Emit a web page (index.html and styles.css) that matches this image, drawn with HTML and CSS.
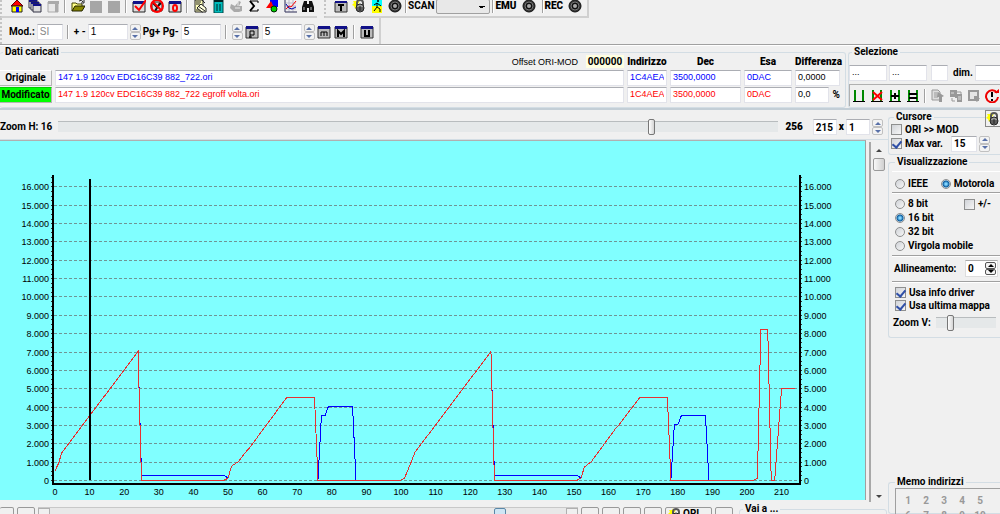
FILE: index.html
```html
<!DOCTYPE html>
<html lang="it">
<head>
    <meta charset="UTF-8">
    <meta name="viewport" content="width=device-width, initial-scale=1.0">
    <title>Editor mappe</title>
    <link rel="stylesheet" href="styles.css">
</head>
<body>
    <svg class="sprites" aria-hidden="true">
        <symbol id="home" viewBox="0 0 14 14"><path d="M1 7L7 1l6 6z" fill="#f00" stroke="#600"/><path d="M2 7h10v6H2z" fill="#ff0" stroke="#222"/><path d="M6 8h3v5H6z" fill="#00f"/></symbol>
        <symbol id="windows" viewBox="0 0 14 14"><path d="M1 1h8v8H1z" fill="#fff" stroke="#334"/><path d="M1 1h8v2H1z" fill="#118"/><path d="M3 3h8v8H3z" fill="#fff" stroke="#334"/><path d="M3 3h8v2H3z" fill="#118"/><path d="M5 5h8v8H5z" fill="#ddd" stroke="#334"/><path d="M5 5h8v2H5z" fill="#118"/></symbol>
        <symbol id="panel" viewBox="0 0 14 14"><path d="M2 3h10v10H2z" fill="#e8e8e8" stroke="#aaa"/><path d="M2 2h11v3H2zM9 5h3v8H9z" fill="#aaa"/></symbol>
        <symbol id="folder" viewBox="0 0 14 14"><path d="M1 12V4h4l1 1h5v3" fill="#ff8" stroke="#440"/><path d="M1 12l3-5h10l-3 5z" fill="#880" stroke="#220"/><path d="M8 2q3-2 4 1m1-2v3h-3" fill="none" stroke="#222"/></symbol>
        <symbol id="square" viewBox="0 0 14 14"><path d="M1 2h12v12H1z" fill="#a6a6a6"/></symbol>
        <symbol id="check" viewBox="0 0 14 14"><path d="M1 3h12v10H1z" fill="#ddd" stroke="#222"/><path d="M1 2h12v3H1z" fill="#118"/><path d="M3 7l4 4 7-10" fill="none" stroke="#f00" stroke-width="2"/></symbol>
        <symbol id="deny" viewBox="0 0 14 14"><path d="M2 3h10v9H2z" fill="#ddd" stroke="#222"/><path d="M3 4l4 4 4-4M5 12l5-8" fill="none" stroke="#111" stroke-width="2"/><circle cx="7" cy="7" r="6" fill="none" stroke="#f00" stroke-width="2"/><path d="M3 3l8 8" stroke="#f00" stroke-width="2"/></symbol>
        <symbol id="zero" viewBox="0 0 14 14"><path d="M1 3h12v10H1z" fill="#ddd" stroke="#222"/><path d="M1 2h12v3H1z" fill="#118"/><ellipse cx="7" cy="9" rx="2" ry="3" fill="none" stroke="#f00" stroke-width="2"/></symbol>
        <symbol id="edit" viewBox="0 0 14 14"><path d="M2 1h8v12H2z" fill="#ffb" stroke="#222"/><path d="M3 3h5M3 5h4M3 11h5" stroke="#222"/><path d="M4 9l4-4 5 4v4H9z" fill="#ffd" stroke="#222"/><path d="M5 7l7 5M9 1l3 3" stroke="#222"/></symbol>
        <symbol id="gauge" viewBox="0 0 14 14"><path d="M3 0h9v14H3z" fill="#0bb" stroke="#044"/><path d="M3 2h9" stroke="#022" stroke-width="2"/><path d="M6 5v7M9 5v7" stroke="#022"/></symbol>
        <symbol id="hand" viewBox="0 0 14 14"><path d="M2 5l4 2 4-5 2 1-2 4h3v5l-3 1H5L1 9z" fill="#aaa"/><path d="M9 3v4M6 9h5" stroke="#eee"/></symbol>
        <symbol id="sigma" viewBox="0 0 14 14"><path d="M11 4V2H3l4 5-4 5h8v-2" fill="none" stroke="#000" stroke-width="1"/><path d="M3 2l4 5-4 5" fill="none" stroke="#000" stroke-width="2"/></symbol>
        <symbol id="shapes" viewBox="0 0 14 14"><path d="M5 1h8v7H5z" fill="#00f"/><path d="M1 9l5-7 3 7z" fill="#f00"/><circle cx="9" cy="10" r="3" fill="#0c0" stroke="#020"/></symbol>
        <symbol id="plot" viewBox="0 0 14 14"><path d="M2 1v12h12M2 4h11M2 7h11M2 10h11M6 1v12M10 1v12" stroke="#bbc" fill="none"/><path d="M2 1v12h12" stroke="#446" fill="none"/><path d="M3 10l3-3 2 1 5-6" fill="none" stroke="#f00"/><path d="M3 5l3 4 3 1 4-2" fill="none" stroke="#00a"/></symbol>
        <symbol id="find" viewBox="0 0 14 14"><path d="M3 2h3v3h2V2h3l2 6v5H8V9H6v4H1V8z" fill="#111"/><path d="M3 8v3M10 8v3" stroke="#bbb"/></symbol>
        <symbol id="win-t" viewBox="0 0 14 14"><path d="M1 3h12v10H1z" fill="#bbb" stroke="#333"/><path d="M1 2h12v2H1z" fill="#118"/><path d="M4 6h6M7 6v6" stroke="#000" stroke-width="2"/></symbol>
        <symbol id="lock" viewBox="0 0 14 14"><path d="M4 0l1 3 3-1-2 3 2 3-3-1-2 3-1-3-2-1 2-2-1-2h3z" fill="#ff0"/><path d="M5 7V4q0-3 3-3t3 3v3" fill="none" stroke="#555" stroke-width="2"/><circle cx="8" cy="9" r="4" fill="#999" stroke="#222"/><path d="M4 9h8M8 7v5M5 11h6" stroke="#222"/></symbol>
        <symbol id="run" viewBox="0 0 14 14"><path d="M2 0h10v7H2z" fill="#0ff"/><path d="M2 7h10v7H2z" fill="#ff0"/><circle cx="8" cy="2" r="1" fill="#000"/><path d="M7 4v4l3 2v3M7 8l-3 4M4 6l3-2 4 3" fill="none" stroke="#000" stroke-width="1"/></symbol>
        <symbol id="disc" viewBox="0 0 14 14"><circle cx="7" cy="7" r="6" fill="#333" stroke="#111"/><circle cx="7" cy="7" r="4" fill="#111" stroke="#777"/><circle cx="7" cy="7" r="2" fill="#aaa"/></symbol>
        <symbol id="win-p" viewBox="0 0 14 14"><path d="M1 2h12v11H1z" fill="#bbb" stroke="#333"/><path d="M1 1h12v3H1z" fill="#118"/><path d="M5 13V6h4v4H5M4 12h3" fill="none" stroke="#000" stroke-width="1"/></symbol>
        <symbol id="win-m" viewBox="0 0 14 14"><path d="M1 2h12v11H1z" fill="#bbb" stroke="#333"/><path d="M1 1h12v3H1z" fill="#118"/><path d="M4 11V7h6v4M7 7v4" fill="none" stroke="#000" stroke-width="1"/></symbol>
        <symbol id="win-mm" viewBox="0 0 14 14"><path d="M1 2h12v11H1z" fill="#bbb" stroke="#333"/><path d="M1 1h12v3H1z" fill="#118"/><path d="M4 12V6l3 3 3-3v6" fill="none" stroke="#000" stroke-width="2"/></symbol>
        <symbol id="win-u" viewBox="0 0 14 14"><path d="M1 2h12v11H1z" fill="#bbb" stroke="#333"/><path d="M1 1h12v3H1z" fill="#118"/><path d="M5 5v6h4V5" fill="none" stroke="#000" stroke-width="2"/></symbol>
        <symbol id="sel" viewBox="0 0 14 14"><path d="M2 1h2v11H2zM10 1h2v11h-2z" fill="#080"/><path d="M1 12h12v1H1z" fill="#000"/></symbol>
        <symbol id="sel-x" viewBox="0 0 14 14"><use href="#sel"/><path d="M3 3l9 8M12 3l-9 8" stroke="#f00" stroke-width="2"/></symbol>
        <symbol id="sel-plus" viewBox="0 0 14 14"><use href="#sel"/><path d="M3 7h8M7 4v6" stroke="#000" stroke-width="2"/></symbol>
        <symbol id="sel-eq" viewBox="0 0 14 14"><use href="#sel"/><path d="M3 5h8M3 9h8" stroke="#000" stroke-width="2"/></symbol>
        <symbol id="copy" viewBox="0 0 14 14"><path d="M1 1h6l2 2v8H1z" fill="#ddd" stroke="#999"/><path d="M3 4h4M3 6h4M3 8h4" stroke="#999"/><path d="M7 3l6 4-2 1v5H8V8H6z" fill="#999"/></symbol>
        <symbol id="paste" viewBox="0 0 14 14"><path d="M1 1h7v7H1zM6 5h7v8H8V9H6z" fill="#999"/><path d="M2 4h3M9 8h3M9 10h3" stroke="#ddd"/><path d="M8 3h4v3M3 9v3h3" fill="none" stroke="#999"/></symbol>
        <symbol id="fill" viewBox="0 0 14 14"><path d="M2 2h9v9H2z" fill="#e6e6e6" stroke="#999" stroke-width="2"/><path d="M7 7h5v2h1l-3 4-3-3z" fill="#999"/></symbol>
        <symbol id="undo" viewBox="0 0 14 14"><path d="M12 4a6 6 0 1 0 1 4" fill="none" stroke="#e00" stroke-width="2"/><path d="M9 4h5V0z" fill="#e00"/><path d="M7 3v5M7 10v2" stroke="#000" stroke-width="2"/></symbol>
    </svg>

    <header>
        <div class="bar-row">
            <div class="bar">
                <button class="tool" aria-label="Home"><svg><use href="#home"/></svg></button>
                <button class="tool" aria-label="Finestre"><svg><use href="#windows"/></svg></button>
                <button class="tool" aria-label="Pannello"><svg><use href="#panel"/></svg></button>
                <span class="sep"></span>
                <button class="tool" aria-label="Apri"><svg><use href="#folder"/></svg></button>
                <button class="tool" aria-label="Salva"><svg><use href="#square"/></svg></button>
                <button class="tool" aria-label="Salva tutto"><svg><use href="#square"/></svg></button>
                <span class="sep"></span>
                <button class="tool" aria-label="Conferma"><svg><use href="#check"/></svg></button>
                <button class="tool" aria-label="Annulla"><svg><use href="#deny"/></svg></button>
                <button class="tool" aria-label="Azzera"><svg><use href="#zero"/></svg></button>
                <span class="sep"></span>
                <button class="tool" aria-label="Modifica"><svg><use href="#edit"/></svg></button>
                <button class="tool" aria-label="Driver"><svg><use href="#gauge"/></svg></button>
                <button class="tool" aria-label="Sposta"><svg><use href="#hand"/></svg></button>
                <button class="tool" aria-label="Somma"><svg><use href="#sigma"/></svg></button>
                <button class="tool" aria-label="Forme"><svg><use href="#shapes"/></svg></button>
                <button class="tool" aria-label="Grafico"><svg><use href="#plot"/></svg></button>
                <button class="tool" aria-label="Cerca"><svg><use href="#find"/></svg></button>
            </div>
            <div class="bar bar-last">
                <button class="tool" aria-label="Testo"><svg><use href="#win-t"/></svg></button>
                <button class="tool" aria-label="Blocca"><svg><use href="#lock"/></svg></button>
                <button class="tool" aria-label="Esegui"><svg><use href="#run"/></svg></button>
                <button class="tool" aria-label="Stato"><svg><use href="#disc"/></svg></button>
                <span class="sep"></span>
                <label for="scan">SCAN</label>
                <select id="scan" class="scan"><option></option></select>
                <span class="sep"></span>
                <b>EMU</b>
                <button class="tool tool-wide" aria-label="Stato EMU"><svg><use href="#disc"/></svg></button>
                <span class="sep"></span>
                <b>REC</b>
                <button class="tool tool-wide" aria-label="Stato REC"><svg><use href="#disc"/></svg></button>
            </div>
        </div>
        <div class="bar-row">
            <div class="bar bar-edit">
                <label for="mod">Mod.:</label>
                <input id="mod" class="txt mod" value="SI" disabled>
                <span class="sep"></span>
                <label for="step">+ -</label>
                <input id="step" class="txt step" value="1">
                <span class="spin"><button aria-label="Su"></button><button aria-label="Giù"></button></span>
                <label for="page">Pg+ Pg-</label>
                <input id="page" class="txt step" value="5">
                <span class="sep"></span>
                <span class="spin"><button aria-label="Su"></button><button aria-label="Giù"></button></span>
                <button class="tool" aria-label="Pagina"><svg><use href="#win-p"/></svg></button>
                <input class="txt step" value="5" aria-label="Mappa">
                <span class="spin"><button aria-label="Su"></button><button aria-label="Giù"></button></span>
                <button class="tool" aria-label="Mappa piccola"><svg><use href="#win-m"/></svg></button>
                <button class="tool" aria-label="Mappa grande"><svg><use href="#win-mm"/></svg></button>
                <span class="sep"></span>
                <button class="tool" aria-label="Ultima"><svg><use href="#win-u"/></svg></button>
            </div>
        </div>
    </header>

    <section class="top">
        <fieldset class="loaded">
            <legend>Dati caricati</legend>
            <div class="data">
                <label class="offset">Offset ORI-MOD <input value="000000" readonly></label>
                <b>Indirizzo</b><b>Dec</b><b>Esa</b><b>Differenza</b>
                <button class="file-btn">Originale</button>
                <input class="txt ori" value="147 1.9 120cv EDC16C39 882_722.ori" aria-label="File originale">
                <input class="txt ori" value="1C4AEA" aria-label="Indirizzo originale">
                <input class="txt ori" value="3500,0000" aria-label="Dec originale">
                <input class="txt ori" value="0DAC" aria-label="Esa originale">
                <input class="txt" value="0,0000" aria-label="Differenza">
                <button class="file-btn file-mod">Modificato</button>
                <input class="txt edited" value="147 1.9 120cv EDC16C39 882_722 egroff volta.ori" aria-label="File modificato">
                <input class="txt edited" value="1C4AEA" aria-label="Indirizzo modificato">
                <input class="txt edited" value="3500,0000" aria-label="Dec modificato">
                <input class="txt edited" value="0DAC" aria-label="Esa modificato">
                <label class="percent"><input class="txt" value="0,0">%</label>
            </div>
        </fieldset>
        <fieldset class="selection">
            <legend>Selezione</legend>
            <div class="range">
                <input class="txt wide" value="..." aria-label="Inizio">
                <input class="txt wide" value="..." aria-label="Fine">
                <input class="txt narrow" aria-label="Tipo">
                <label for="dim">dim.</label>
                <input id="dim" class="txt wide">
            </div>
            <div class="sel-tools">
                <button class="tool" aria-label="Seleziona"><svg><use href="#sel"/></svg></button>
                <button class="tool" aria-label="Deseleziona"><svg><use href="#sel-x"/></svg></button>
                <button class="tool" aria-label="Aggiungi"><svg><use href="#sel-plus"/></svg></button>
                <button class="tool" aria-label="Uguale"><svg><use href="#sel-eq"/></svg></button>
                <span class="sep"></span>
                <button class="tool" aria-label="Copia"><svg><use href="#copy"/></svg></button>
                <button class="tool" aria-label="Incolla"><svg><use href="#paste"/></svg></button>
                <button class="tool" aria-label="Riempi"><svg><use href="#fill"/></svg></button>
                <button class="tool" aria-label="Ripristina"><svg><use href="#undo"/></svg></button>
            </div>
        </fieldset>
    </section>

    <main>
        <section class="work">
            <div class="zoom-h">
                <label for="zoomh">Zoom H: 16</label>
                <input id="zoomh" type="range" min="1" max="256" value="212">
                <b>256</b>
                <input class="txt num" value="215" aria-label="Colonne">
                <b>x</b>
                <input class="txt num" value="1" aria-label="Righe">
                <span class="spin"><button aria-label="Su"></button><button aria-label="Giù"></button></span>
            </div>
            <div class="view">
                <div class="chart-box"><svg id="chart" viewBox="0 0 865 360" preserveAspectRatio="xMinYMin meet"></svg></div>
                <div class="scroll-v"><button class="up" aria-label="Scorri su"></button><span class="thumb"></span><button class="down" aria-label="Scorri giù"></button></div>
            </div>
            <div class="bottom">
                <button class="flat small" aria-label="Primo"></button>
                <button class="flat" aria-label="Precedente"></button>
                <div class="scroll-h"><button aria-label="Scorri a sinistra"></button><span class="thumb"></span><button aria-label="Scorri a destra"></button></div>
                <button class="flat" aria-label="Vista 1"></button>
                <button class="flat" aria-label="Vista 2"></button>
                <button class="flat" aria-label="Vista 3"></button>
                <button class="flat" aria-label="Vista 4"></button>
                <button class="flat ori-btn"><svg><use href="#lock"/></svg>ORI</button>
                <button class="flat" aria-label="Successivo"></button>
                <fieldset class="goto"><legend>Vai a ...</legend></fieldset>
            </div>
        </section>

        <aside>
            <button class="pin" aria-label="Blocca cursore"><svg><use href="#lock"/></svg></button>
            <fieldset class="cursor">
                <legend>Cursore</legend>
                <label class="opt"><input type="checkbox">ORI &gt;&gt; MOD</label>
                <div class="maxvar">
                    <label class="opt"><input type="checkbox" checked>Max var.</label>
                    <input class="txt num" value="15" aria-label="Valore massimo">
                    <span class="spin"><button aria-label="Su"></button><button aria-label="Giù"></button></span>
                </div>
            </fieldset>
            <fieldset class="display">
                <legend>Visualizzazione</legend>
                <div class="block pair">
                    <label class="opt"><input type="radio" name="fmt">IEEE</label>
                    <label class="opt"><input type="radio" name="fmt" checked>Motorola</label>
                </div>
                <div class="block bits">
                    <div class="pair">
                        <label class="opt"><input type="radio" name="bits">8 bit</label>
                        <label class="opt sign"><input type="checkbox">+/-</label>
                    </div>
                    <label class="opt"><input type="radio" name="bits" checked>16 bit</label>
                    <label class="opt"><input type="radio" name="bits">32 bit</label>
                    <label class="opt"><input type="radio" name="bits">Virgola mobile</label>
                </div>
                <div class="block align">
                    <label for="align">Allineamento:</label>
                    <span class="align-box"><input id="align" value="0"><span class="spin dark"><button aria-label="Su"></button><button aria-label="Giù"></button></span></span>
                </div>
                <div class="block last">
                    <label class="opt"><input type="checkbox" checked>Usa info driver</label>
                    <label class="opt"><input type="checkbox" checked>Usa ultima mappa</label>
                </div>
                <div class="zoom-v">
                    <label for="zoomv">Zoom V:</label>
                    <input id="zoomv" type="range" min="0" max="10" value="2">
                </div>
            </fieldset>
            <fieldset class="memo">
                <legend>Memo indirizzi</legend>
                <div class="slots">
                    <button>1</button><button>2</button><button>3</button><button>4</button><button>5</button>
                    <button>6</button><button>7</button><button>8</button><button>9</button><button>10</button>
                </div>
            </fieldset>
        </aside>
    </main>
    <script src="chart.js"></script>
</body>
</html>
```
FILE: styles.css
```css
* {
    box-sizing: border-box;
}
body {
    margin: 0;
    height: 100vh;
    display: flex;
    flex-direction: column;
    overflow: hidden;
    background-color: #f0f0f0;
    color: #000;
    font: bold 10px/12px Roboto, 'Liberation Sans', sans-serif;
}
button, input, select {
    font: inherit;
    color: inherit;
    margin: 0;
    padding: 0;
    min-width: 0;
    border: 0;
    border-radius: 0;
}
button {
    background: none;
    flex: none;
}
fieldset {
    margin: 0;
    padding: 0;
    min-width: 0;
    border: 1px solid #d3dde4;
    border-radius: 3px;
}
legend {
    margin-left: 3px;
    padding: 0 2px;
}
.sprites {
    display: none;
}

/* toolbars */
header {
    flex: none;
    border-bottom: 1px solid #a0a0a0;
    box-shadow: 0 1px #fff;
}
.bar-row {
    display: flex;
    height: 18px;
}
.bar-row + .bar-row {
    height: 26px;
}
.bar {
    display: flex;
    align-items: center;
    padding: 0 0 4px 6px;
    border-bottom: 2px solid #d0d0d0;
    border-left: 2px dotted #c4c4c4;
}
.bar-last {
    margin-left: 7px;
    border-right: 2px solid #d0d0d0;
    padding-right: 0;
}
.bar-edit {
    padding: 2px 4px 0 7px;
    border-right: 2px solid #d0d0d0;
    border-bottom: 0;
    gap: 2px;
}
.tool {
    width: 18px;
    height: 14px;
}
.bar-edit .tool {
    width: 15px;
}
.tool-wide {
    width: 24px;
}
.tool svg, .pin svg, .ori-btn svg {
    display: block;
    margin: auto;
    width: 14px;
    height: 14px;
}
.sep {
    width: 2px;
    height: 14px;
    margin: 0 3px 0 2px;
    border-left: 1px solid #a0a0a0;
    border-right: 1px solid #fff;
    flex: none;
}
.bar-last .sep {
    margin: 0 1px;
}
.scan {
    appearance: none;
    width: 54px;
    height: 15px;
    margin: 0 1px 0 2px;
    border: 1px solid #a0a0a0;
    border-radius: 2px;
    background-color: #e8e8e8;
    background-image: linear-gradient(45deg, transparent 50%, #000 50%), linear-gradient(-45deg, transparent 50%, #000 50%);
    background-position: right 7px top 6px, right 4px top 6px;
    background-size: 3px 3px;
    background-repeat: no-repeat;
}
.txt {
    height: 16px;
    padding: 0 2px 2px;
    border: 1px solid #e2e3ea;
    border-top-color: #abadb3;
    background-color: #fff;
    font: 9px/12px 'Liberation Sans', sans-serif;
}
.mod {
    width: 26px;
    color: #888;
}
.step {
    width: 40px;
}
.bar-edit .txt {
    font-size: 10px;
}
.spin {
    display: flex;
    flex-direction: column;
    width: 11px;
    height: 16px;
    flex: none;
}
.spin button {
    flex: 1;
    border: 1px solid #c0c0c0;
    border-radius: 2px;
    background-color: #f3f3f3;
    display: flex;
    align-items: center;
    justify-content: center;
}
.spin button::before {
    content: "";
    border: 3px solid transparent;
    border-top-width: 0;
    border-bottom-color: #5870a8;
}
.spin button:last-child::before {
    transform: rotate(180deg);
}

/* loaded files */
.top {
    display: grid;
    grid-template-columns: 1fr 152px;
    gap: 2px;
    height: 65px;
    flex: none;
    padding-top: 1px;
    border-bottom: 2px solid #c3ced6;
}
.loaded {
    border-left: 0;
    padding-right: 5px;
}
.data {
    display: grid;
    grid-template-columns: 52px 1fr 40px 71px 48px 45px;
    gap: 1px 3px;
    margin-top: -4px;
    text-align: center;
}
.offset {
    grid-column: 1 / 3;
    display: flex;
    justify-content: flex-end;
    align-items: center;
    gap: 8px;
    height: 15px;
    font: 9px/12px 'Liberation Sans', sans-serif;
}
.offset input {
    width: 38px;
    height: 13px;
    background-color: #ffffe1;
    font: bold 10px/12px Roboto, 'Liberation Sans', sans-serif;
    text-align: center;
}
.data b {
    align-self: center;
}
.file-btn {
    height: 16px;
    border: 1px solid #b4b4b4;
    border-top-color: #fff;
    border-left: 0;
    background-color: #f0f0f0;
}
.file-mod {
    background-color: #0f0;
    border-top-color: #0c0;
}
.ori {
    color: #00f;
}
.edited {
    color: #f00;
}
.percent {
    display: flex;
    align-items: center;
    gap: 4px;
}
.percent input {
    width: 34px;
}
.selection, aside fieldset {
    border-right: 0;
    border-radius: 3px 0 0 3px;
}
.range {
    display: flex;
    align-items: center;
    gap: 2px;
    margin: 7px 0 3px;
}
.wide {
    width: 38px;
    flex: none;
}
.narrow {
    width: 17px;
    margin: 0 3px 0 2px;
    flex: none;
}
.sel-tools {
    display: flex;
    align-items: center;
    height: 22px;
    border-top: 1px solid #b0b0b0;
    border-left: 1px solid #b0b0b0;
}

/* work area */
main {
    display: grid;
    grid-template-columns: 1fr 112px;
    flex: 1;
    min-height: 0;
}
.work {
    display: flex;
    flex-direction: column;
    min-width: 0;
    min-height: 0;
}
.zoom-h {
    display: flex;
    align-items: center;
    gap: 2px;
    height: 30px;
    flex: none;
    padding: 5px 5px 0 0;
    border-bottom: 1px solid #d3dde4;
}
.zoom-h label {
    flex: none;
    width: 56px;
}
.zoom-h [type=range] {
    flex: 1;
    margin-right: 5px;
}
.zoom-h .num {
    width: 24px;
}
.zoom-h .num:nth-of-type(2) {
    margin-left: 8px;
}
.num {
    width: 26px;
    padding-bottom: 0;
    font: bold 10px/12px Roboto, 'Liberation Sans', sans-serif;
}
[type=range] {
    appearance: none;
    height: 16px;
    background: linear-gradient(#b8bcbe, #b8bcbe) 0 2px / 100% 1px no-repeat, linear-gradient(#e5e8e9, #e5e8e9) 0 2px / 100% 11px no-repeat;
}
[type=range]::-webkit-slider-thumb {
    appearance: none;
    width: 7px;
    height: 16px;
    border: 1px solid #777;
    border-radius: 2px;
    background: linear-gradient(90deg, #fff, #d4d4d4);
}
.view {
    display: flex;
    flex: 1;
    min-height: 0;
}
.chart-box {
    flex: 1;
    min-width: 0;
    background-color: #80ffff;
    border-top: 1px solid #b0b0b0;
    border-right: 1px solid #a0a0a0;
    margin-bottom: 2px;
    overflow: hidden;
}
#chart {
    display: block;
    width: 100%;
    font: 9px 'Liberation Sans', sans-serif;
}
.grid {
    stroke: #6f9595;
    stroke-dasharray: 3 2;
}
.axis {
    stroke: #000;
    stroke-width: 2;
}
.tick {
    stroke: #333;
}
.line {
    fill: none;
    shape-rendering: crispEdges;
}
.line-ori {
    stroke: #0000ff;
}
.line-mod {
    stroke: #e83030;
}
.scroll-v {
    display: flex;
    flex-direction: column;
    width: 17px;
    margin: 2px 2px 0 3px;
    border-left: 2px solid #a8a8a8;
}
.up, .down {
    height: 16px;
    display: flex;
    align-items: center;
    justify-content: center;
}
.up::before, .down::before {
    content: "";
    border: 3px solid transparent;
    border-top-width: 0;
    border-bottom-color: #444;
}
.down {
    height: 12px;
    margin-top: auto;
}
.down::before {
    transform: rotate(180deg);
}
.thumb {
    width: 12px;
    height: 13px;
    border: 1px solid #999;
    border-radius: 2px;
    background: linear-gradient(90deg, #f8f8f8, #d0d0d0);
}
.scroll-v .thumb {
    align-self: center;
}
.bottom {
    display: flex;
    height: 12px;
    flex: none;
    padding-top: 5px;
    gap: 3px;
    overflow: hidden;
}
.flat {
    width: 18px;
    height: 20px;
    border: 1px solid #999;
    border-radius: 2px;
}
.small {
    width: 14px;
    border-left: 0;
}
.ori-btn {
    display: flex;
    align-items: flex-start;
    width: 47px;
}
.ori-btn svg {
    margin: 0 1px 0 2px;
}
.scroll-h {
    display: flex;
    justify-content: space-between;
    flex: 1;
    height: 20px;
    border-top: 1px solid #c8c8c8;
    background-color: #e8e8e8;
}
.scroll-h button {
    width: 12px;
    border: 1px solid #b0b0b0;
    background-color: #f0f0f0;
}
.scroll-h .thumb {
    margin-left: auto;
    margin-right: 60px;
    border-color: #5a88a8;
    background: #cfe6f4;
}
.goto {
    width: 148px;
    margin: -4px 1px 0 3px;
    height: 30px;
}

/* side panel */
aside {
    position: relative;
    display: flex;
    flex-direction: column;
    min-height: 0;
    gap: 1px;
    padding-top: 1px;
}
.pin {
    position: absolute;
    right: 0;
    top: 0;
    width: 15px;
    height: 17px;
    border: 1px solid #888;
    border-right: 0;
    background-color: #f0f0f0;
}
.cursor {
    height: 44px;
    flex: none;
    padding-left: 2px;
}
.opt {
    display: flex;
    align-items: center;
    gap: 3px;
    height: 13px;
    white-space: nowrap;
}
.opt input {
    appearance: none;
    width: 11px;
    height: 11px;
    flex: none;
    border: 1px solid #8e8f8f;
    background: linear-gradient(135deg, #d0d3d8, #f6f6f6);
}
.opt [type=checkbox] {
    display: flex;
    justify-content: center;
}
.opt [type=checkbox]:checked::before {
    content: "";
    width: 4px;
    height: 7px;
    border: solid #3050a8;
    border-width: 0 2px 2px 0;
    transform: rotate(40deg);
}
.opt [type=radio] {
    width: 10px;
    height: 10px;
    border-radius: 50%;
}
.opt [type=radio]:checked {
    background: radial-gradient(#7fd4ff 0 1px, #0a5a9c 3px, #d8e6f0 4px);
}
.maxvar {
    display: flex;
    align-items: center;
    height: 15px;
    gap: 2px;
}
.maxvar .opt {
    width: 58px;
}
.display {
    flex: none;
    padding: 3px 0 6px 3px;
}
.block {
    border-bottom: 1px solid #a0a0a0;
    box-shadow: 0 1px #fff;
    padding: 4px 0 2px 3px;
}
.pair {
    display: flex;
    gap: 13px;
}
.block.pair {
    padding-top: 5px;
    border-top: 1px solid #fff;
}
.bits .opt {
    height: 14px;
}
.sign {
    margin-left: auto;
    margin-right: 9px;
}
.align {
    display: flex;
    align-items: center;
    justify-content: space-between;
    height: 26px;
    padding: 0 2px 0 2px;
}
.align-box {
    display: flex;
    align-items: center;
    background-color: #fff;
    border: 1px solid #ddd;
    border-top-color: #aaa;
    width: 33px;
    height: 17px;
    padding-right: 1px;
}
.align-box input {
    flex: 1;
    background: none;
    padding-left: 2px;
}
.dark {
    height: 13px;
}
.spin.dark button {
    border-color: #555;
}
.spin.dark button::before {
    border-bottom-color: #000;
}
.last {
    border: 0;
    box-shadow: none;
}
.zoom-v {
    display: flex;
    align-items: center;
    justify-content: space-between;
    padding: 1px 4px 0 1px;
}
.zoom-v input {
    width: 60px;
}
.memo {
    height: 38px;
    flex: none;
    margin-top: auto;
    padding-left: 6px;
}
.memo legend {
    margin-left: 0;
}
.slots {
    display: grid;
    grid-template-columns: repeat(5, 18px);
    grid-auto-rows: 15px;
    padding: 4px 0 0 3px;
    border-top: 1px solid #a0a0a0;
    border-left: 1px solid #a0a0a0;
    color: #999;
}
```
FILE: chart.js
```js
const original = [
    [0, 500], [1, 900], [2, 1500], [4, 2000], [24, 7000], [25, 250], [49, 250], [50, 100],
    [51, 750], [53, 1000], [55, 1500], [56, 1700], [67, 4500], [75, 4500], [76, 0],
    [77, 3500], [78, 3500], [79, 4000], [86, 4000], [87, 0], [100, 0], [101, 100],
    [103, 1000], [104, 1500], [126, 7000], [127, 250], [151, 250], [152, 100],
    [153, 700], [155, 1000], [162, 2800], [163, 3000], [169, 4500], [177, 4500], [178, 0],
    [179, 3000], [180, 3000], [181, 3500], [188, 3500], [189, 0], [202, 0], [203, 100],
    [204, 8200], [206, 8200], [207, 0], [208, 0], [210, 5000], [214, 5000]
];
const modified = [
    [0, 500], [1, 900], [2, 1500], [4, 2000], [24, 7000], [25, 0], [49, 0], [50, 100],
    [51, 750], [53, 1000], [55, 1500], [56, 1700], [67, 4500], [75, 4500], [76, 0],
    [100, 0], [101, 100], [103, 1000], [104, 1500], [126, 7000], [127, 0], [151, 0],
    [152, 100], [153, 700], [155, 1000], [162, 2800], [163, 3000], [169, 4500],
    [177, 4500], [178, 0], [202, 0], [203, 100], [204, 8200], [206, 8200], [207, 0],
    [208, 0], [210, 5000], [214, 5000]
];

const px = i => 55 + i * 3.46;
const py = v => 339 - v * 0.01835;

function line(x1, y1, x2, y2, name) {
    return `<line class="${name}" x1="${x1}" y1="${y1}" x2="${x2}" y2="${y2}"/>`;
}

function series(points, name) {
    const list = points.map(([i, v]) => `${px(i)},${py(v)}`).join(' ');
    return `<polyline class="line ${name}" points="${list}"/>`;
}

let out = '';
for (let v = 0; v <= 16000; v += 1000) {
    const y = Math.round(py(v)) + 0.5;
    const text = v === 0 ? '0' : `${v / 1000}.000`;
    out += line(54, y, 799, y, 'grid');
    out += `<text x="49" y="${y + 3}" text-anchor="end">${text}</text>`;
    out += `<text x="804" y="${y + 3}">${text}</text>`;
}
// minor ticks every 250 units, outside both axes
for (let v = 0; v <= 16500; v += 250) {
    const y = Math.round(py(v)) + 0.5;
    out += line(51, y, 52, y, 'tick') + line(801, y, 802, y, 'tick');
}
for (let i = 0; i <= 210; i += 10) {
    out += `<text x="${px(i)}" y="354" text-anchor="middle">${i}</text>`;
}
out += series(original, 'line-ori') + series(modified, 'line-mod');
out += line(53, 34, 53, 344, 'axis') + line(52, 343, 801, 343, 'axis') + line(800, 34, 800, 344, 'axis');
out += line(90, 38, 90, 339, 'axis');
document.getElementById('chart').innerHTML = out;
```
